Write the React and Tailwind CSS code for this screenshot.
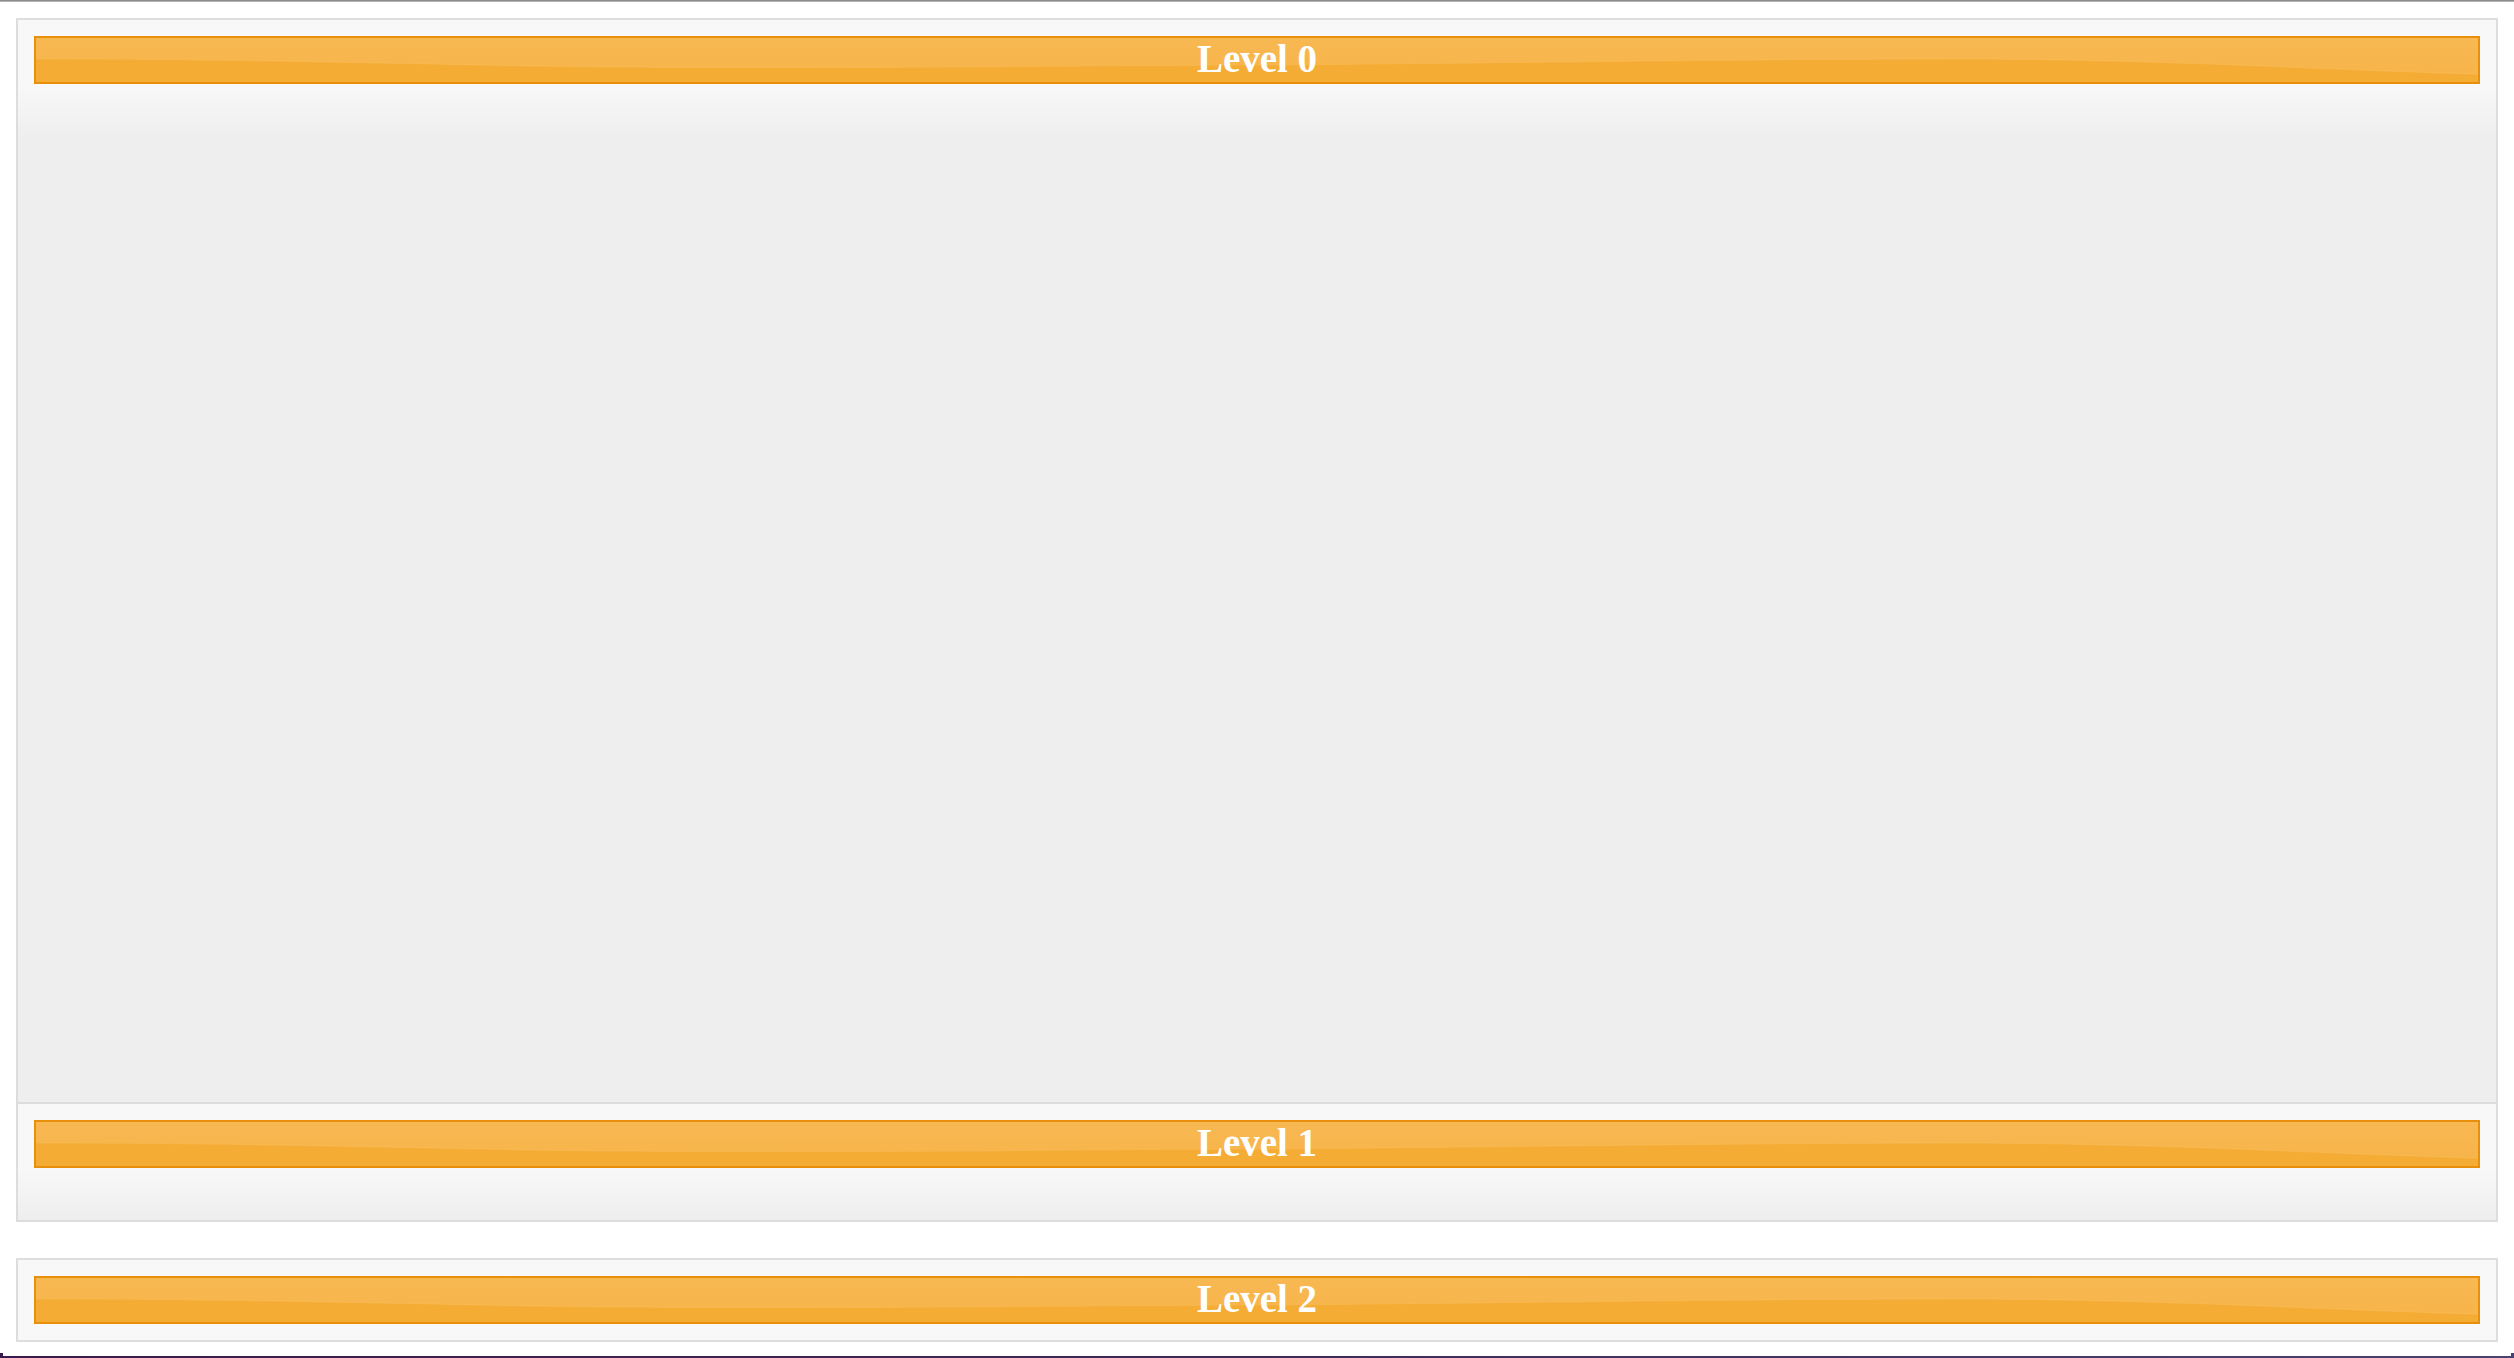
import React from 'react';

// Glossy orange title bar with a soft wave highlight
function LevelBar({ label, id }) {
  const gid = `hl-${id}`;
  return (
    <div className="relative h-[48px] border-2 border-[#e8900c] bg-[#f5ac35] overflow-hidden">
      <svg
        className="absolute inset-0 w-full h-full"
        viewBox="0 0 2446 44"
        preserveAspectRatio="none"
      >
        <defs>
          <linearGradient id={gid} x1="0" y1="0" x2="0" y2="1">
            <stop offset="0" stopColor="#f8b852" />
            <stop offset="1" stopColor="#f7b44a" />
          </linearGradient>
        </defs>
        <path
          d="M0 0 H2446 V36 C2300 32 2150 22 1950 21 C1700 20 1450 26 1200 27 C950 28 700 32 450 27 C300 24 150 20 0 21 Z"
          fill={`url(#${gid})`}
        />
        <path
          d="M0 21 C150 20 300 24 450 27 C700 32 950 28 1200 27 C1450 26 1700 20 1950 21 C2150 22 2300 32 2446 36"
          fill="none"
          stroke="#f9bc5a"
          strokeWidth="1.2"
          opacity="0.6"
        />
      </svg>
      <div className="relative flex h-full items-center justify-center pb-[2px]">
        <span className="text-white font-bold text-[39px] leading-[42px] font-['Liberation_Serif',_'Times_New_Roman',_serif]">
          {label}
        </span>
      </div>
    </div>
  );
}

export default function App() {
  return (
    <div className="flex h-screen w-full flex-col bg-white">
      {/* window top edge */}
      <div className="h-[2px] w-full border-t border-[#8a8a8a] bg-[#b4b4b4]" />

      <div className="flex flex-col px-4 pt-4">
        {/* Level 0 + nested Level 1 */}
        <div className="flex flex-col border-2 border-[#dddddd] bg-[#f8f8f8]">
          <div className="px-4 pt-4">
            <LevelBar label="Level 0" id="l0" />
          </div>
          <div className="h-[1018px] bg-[linear-gradient(#f8f8f8,#eeeeee_56px)]" />

          <div className="flex flex-col border-t-2 border-[#dddddd]">
            <div className="px-4 pt-4">
              <LevelBar label="Level 1" id="l1" />
            </div>
            <div className="h-[52px] bg-[linear-gradient(#f8f8f8,#eeeeee)]" />
          </div>
        </div>

        {/* Level 2 */}
        <div className="mt-[36px] border-2 border-[#dddddd] bg-[#f8f8f8] p-4">
          <LevelBar label="Level 2" id="l2" />
        </div>
      </div>

      {/* window bottom edge */}
      <div className="relative mt-auto h-[2px] w-full bg-[linear-gradient(90deg,#3a1a4c,#3f2a5a_50%,#4a4272)]">
        <div className="absolute bottom-[2px] left-0 h-[3px] w-[3px] bg-[#3a1a4c]" />
        <div className="absolute bottom-[2px] right-0 h-[3px] w-[3px] bg-[#4a4272]" />
      </div>
    </div>
  );
}
